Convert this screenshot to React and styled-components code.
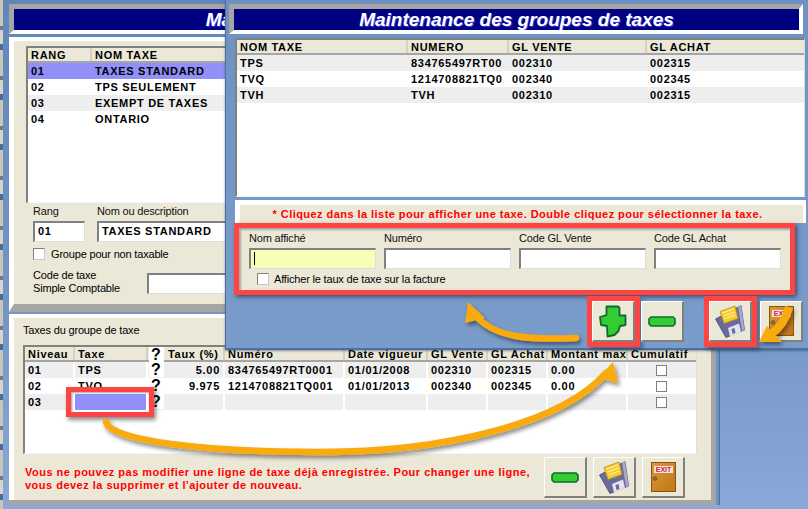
import styled, { createGlobalStyle } from "styled-components";

const beige = "#ebe8d8";
const rowGray = "#eeeeee";
const selected = "#9090f8";
const red = "#ff4444";
const orange = "#f9ab0b";

const GlobalStyle = createGlobalStyle`
  html, body {
    margin: 0;
    padding: 0;
    background: #6d92c2;
  }
  * {
    box-sizing: border-box;
  }
`;

const Desktop = styled.div`
  position: relative;
  width: 808px;
  height: 509px;
  overflow: hidden;
  font-family: "Liberation Sans", Arial, sans-serif;
  font-size: 11px;
  letter-spacing: -0.18px;
  color: #000;
  background: linear-gradient(180deg, #5f87b9 0%, #7396c6 60%, #8aa8d8 100%);
`;

const BackStrip = styled.div`
  position: absolute;
  left: 0;
  top: 0;
  width: 3px;
  height: 509px;
  background: repeating-linear-gradient(
    180deg,
    #c9c6b8 0,
    #c9c6b8 26px,
    #77778c 26px,
    #77778c 30px,
    #d8d5c8 30px,
    #d8d5c8 44px,
    #4c6d9c 44px,
    #4c6d9c 50px
  );
`;

const TopWindow = styled.section`
  position: absolute;
  left: 9px;
  top: 0;
  width: 707px;
  height: 312px;
  padding-top: 4px;
  display: flex;
  flex-direction: column;
`;

const LowerWindow = styled.section`
  position: absolute;
  left: 9px;
  top: 314px;
  width: 707px;
  height: 191px;
  display: flex;
  flex-direction: column;
  padding: 4px 0 0 5px;
  background: ${beige};
  border-right: 5px solid #a5a5a5;
  border-bottom: 5px solid #a5a5a5;
  box-shadow: inset 5px 4px 0 #fff, 3px 0 0 #6d92c2, 4px 0 0 #4d6f9e;
`;

const TaxWindow = styled.section`
  position: absolute;
  left: 225px;
  top: 0;
  width: 583px;
  height: 350px;
  padding: 4px 0 0 3px;
  display: flex;
  flex-direction: column;
  background: linear-gradient(180deg, #6d92c2 0%, #7a9ccb 100%);
  border-left: 1px solid #4d6f9e;
  border-bottom: 2px solid #4d6f9e;
  box-shadow: 0 1px 2px rgba(40, 60, 90, 0.5);
`;

const TitleFrame = styled.div`
  flex: none;
  height: 30px;
  margin-right: ${(p) => p.$right || 0}px;
  border-top: 5px solid #a5a5a5;
  border-left: 5px solid #a5a5a5;
  border-right: 4px solid #fff;
  border-bottom: 4px solid #fff;
`;

const TitleBar = styled.h1`
  margin: 0;
  height: 100%;
  display: flex;
  align-items: center;
  justify-content: center;
  background: #000080;
  color: #fff;
  font: italic bold 19px "Liberation Sans", Arial, sans-serif;
  letter-spacing: 0;
  white-space: nowrap;
  overflow: hidden;
  text-shadow: 1px 1px 0 #3a3ae0;
`;

const MainPanel = styled.div`
  flex: 1;
  margin-top: 3px;
  padding: 5px 12px 0;
  background: ${beige};
  border-top: 4px solid #fff;
  border-left: 5px solid #fff;
  border-bottom: 8px solid #a5a5a5;
`;

const ListBox = styled.div`
  flex: none;
  width: ${(p) => p.$width}px;
  height: ${(p) => p.$height}px;
  background: #fff;
  border-top: 2px solid #808080;
  border-left: 2px solid #808080;
  border-right: 1px solid #ddd;
  border-bottom: 1px solid #f4f4f4;
  overflow: hidden;
`;

const Row = styled.div`
  display: grid;
  grid-template-columns: ${(p) => p.$cols};
  height: 16px;
  font: bold 11px "Liberation Sans", Arial, sans-serif;
  letter-spacing: 0.7px;
  line-height: 16px;
  background: ${(p) => (p.$selected ? selected : p.$odd ? rowGray : "#fff")};
`;

const HeadRow = styled(Row)`
  background: ${beige};
  border-bottom: 2px solid #a5a5a5;
  height: 15px;
  line-height: 15px;
`;

const Cell = styled.div`
  padding: 0 3px;
  white-space: nowrap;
  overflow: hidden;
  height: 16px;
  text-align: ${(p) => p.$align || "left"};
  border-right: ${(p) => (p.$grid ? "2px solid #fff" : "none")};
`;

const HeadCell = styled(Cell)`
  height: 13px;
  border-right: 2px solid #d4d0c4;
  overflow: visible;
`;

const HeadLast = styled(Cell)`
  height: 13px;
  overflow: visible;
`;

const HelpCell = styled.div`
  display: flex;
  align-items: center;
  justify-content: center;
  height: 15px;
  margin: 0 1px;
  background: #fff;
  font: bold 16px/15px "Liberation Sans", Arial, sans-serif;
  letter-spacing: 0;
  border-right: 1px solid #fff;
`;

const BlueCell = styled.div`
  background: ${selected};
  border: 1px solid #fff;
  border-width: 0 2px 0 0;
`;

const CheckCell = styled.div`
  display: flex;
  align-items: center;
  justify-content: center;
`;

const CheckBox = styled.span`
  flex: none;
  display: block;
  width: 12px;
  height: 12px;
  background: #fff;
  border: 1px solid #808080;
  border-right-color: #c8c8c8;
  border-bottom-color: #c8c8c8;
`;

const GridCheck = styled(CheckBox)`
  width: 11px;
  height: 11px;
  border-color: #808080;
`;

const FormGrid = styled.div`
  display: grid;
  grid-template-columns: 52px 12px 400px;
  margin: 2px 0 0 7px;
  row-gap: 6px;
`;

const Field = styled.label`
  display: flex;
  flex-direction: column;
  grid-column: ${(p) => p.$col || "auto"};
  gap: 3px;
`;

const FieldLabel = styled.span`
  display: block;
  height: 13px;
  line-height: 13px;
  font-size: 11px;
  color: #111;
  white-space: nowrap;
`;

const Input = styled.div`
  height: 21px;
  padding: 0 3px;
  background: ${(p) => (p.$active ? "#f8fdb8" : "#fff")};
  border-top: 2px solid #808080;
  border-left: 2px solid #808080;
  border-right: 1px solid #ddd;
  border-bottom: 1px solid #ddd;
  font: bold 11px "Liberation Sans", Arial, sans-serif;
  letter-spacing: 0.7px;
  line-height: 17px;
  white-space: nowrap;
`;

const Caret = styled.span`
  display: block;
  width: 1px;
  height: 13px;
  margin-top: 2px;
  background: #000;
`;

const CheckRow = styled.div`
  display: flex;
  align-items: center;
  gap: 6px;
  grid-column: 1 / -1;
  font-size: 11px;
`;

const CodeRow = styled.div`
  display: flex;
  align-items: center;
  grid-column: 1 / -1;
  margin-top: 5px;
  gap: 15px;
`;

const CodeLabel = styled.div`
  width: 99px;
  margin-top: -2px;
  line-height: 13px;
  font-size: 11px;
`;

const CodeInput = styled(Input)`
  width: 300px;
`;

const GroupCaption = styled.div`
  margin: 6px 0 8px 9px;
  font-size: 11px;
  line-height: 13px;
`;

const GroupList = styled(ListBox)`
  margin-left: 9px;
`;

const LowerFoot = styled.div`
  display: flex;
  margin: 3px 0 0 11px;
  width: 660px;
  justify-content: space-between;
`;

const Warning = styled.p`
  margin: 9px 0 0;
  color: #ff0000;
  font: bold 11px "Liberation Sans", Arial, sans-serif;
  letter-spacing: 0.49px;
  line-height: 13px;
  white-space: nowrap;
`;

const ToolGroup = styled.div`
  display: flex;
  gap: ${(p) => p.$gap || 6}px;
`;

const ToolButton = styled.button`
  flex: none;
  width: 43px;
  height: 41px;
  padding: 0;
  display: flex;
  align-items: center;
  justify-content: center;
  background: ${beige};
  border: 1px solid #fff;
  border-right: 2px solid #808080;
  border-bottom: 2px solid #808080;
  ${(p) =>
    p.$marked &&
    `
    outline: 5px solid ${red};
    outline-offset: 0;
    box-shadow: 3px 3px 4px 5px rgba(30, 40, 60, 0.45);
  `}
`;

const TaxListBox = styled(ListBox)`
  margin: 4px 0 0 6px;
`;

const NoticeStrip = styled.div`
  flex: none;
  height: 23px;
  margin: 3px 2px 0 6px;
  padding: 3px 8px 0 0;
  background: ${beige};
  border-top: 5px solid #fff;
  border-left: 5px solid #fff;
  border-right: 3px solid #fff;
  color: #ff0000;
  text-align: center;
  font: bold 11px "Liberation Sans", Arial, sans-serif;
  letter-spacing: 0.45px;
  line-height: 12px;
  white-space: nowrap;
`;

const FieldsPanel = styled.div`
  flex: none;
  width: 561px;
  height: 72px;
  margin-left: 5px;
  padding: 4px 10px 0;
  background: ${beige};
  border: 5px solid ${red};
  box-shadow: 2px 2px 4px rgba(20, 30, 50, 0.6), inset 2px 2px 2px rgba(90, 90, 90, 0.45);
`;

const FieldRow = styled.div`
  display: grid;
  grid-template-columns: repeat(4, 127px);
  column-gap: 8px;
`;

const PanelCheck = styled.div`
  display: flex;
  align-items: center;
  gap: 5px;
  margin: 4px 0 0 8px;
  font-size: 11px;
`;

const WindowTools = styled.div`
  display: flex;
  justify-content: flex-end;
  margin: 6px 5px 0 0;
  gap: 25px;
`;

const Overlay = styled.svg`
  position: absolute;
  left: 0;
  top: 0;
  width: 808px;
  height: 509px;
  pointer-events: none;
`;

const CellMark = styled.div`
  position: absolute;
  left: 66px;
  top: 387px;
  width: 88px;
  height: 30px;
  border: 5px solid ${red};
  box-shadow: 2px 3px 4px rgba(30, 30, 30, 0.5), inset 1px 1px 2px rgba(80, 80, 80, 0.5);
`;

const PlusIcon = () => (
  <svg width="28" height="33" viewBox="0 0 28 33">
    <path
      d="M7.5 1.5 L19 1.5 L20.5 3 L20.5 10.5 L26.5 10.5 L26.5 20 L21 21 L19.5 26 L15.5 30 L8.5 31.5 L8 21 L2 20 L1 12 L7.5 10 Z"
      fill="#33cc33"
      stroke="#0b6b2e"
      strokeWidth="1.8"
      strokeLinejoin="round"
    />
  </svg>
);

const MinusIcon = () => (
  <svg width="28" height="11" viewBox="0 0 28 11">
    <path
      d="M3 1 H25 L27 3 V8 L25 10 H3 L1 8 V3 Z"
      fill="#33cc33"
      stroke="#0b6b2e"
      strokeWidth="1.6"
    />
  </svg>
);

const SaveIcon = () => (
  <svg width="30" height="33" viewBox="0 0 30 33">
    <path d="M0.5 14 L26 0.5 L29.5 25 L11 32.5 Z" fill="#6a6a9c" stroke="#45456e" strokeWidth="0.8" />
    <path d="M23 1.5 L26 0.5 L29.5 25 L27 26 Z" fill="#a8a8c8" />
    <path d="M5 6.5 L20 1 L23 13.5 L9 18.5 Z" fill="#f6cc30" stroke="#b98d18" strokeWidth="0.8" />
    <path d="M7.5 8 L19 4 M8.5 11 L20 7 M9.5 14 L20.5 10" stroke="#fff09a" strokeWidth="1.2" />
    <path d="M13 23 L24 18.5 L26 27 L15 31.5 Z" fill="#e4e4ee" />
    <path d="M16.5 24 L19.5 23 L20.5 28 L17.5 29 Z" fill="#6a6a9c" />
  </svg>
);

const ExitIcon = () => (
  <svg width="25" height="30" viewBox="0 0 25 30">
    <defs>
      <linearGradient id="doorWood" x1="0" x2="1" y1="0" y2="1">
        <stop offset="0" stopColor="#dd9a35" />
        <stop offset="1" stopColor="#bd7518" />
      </linearGradient>
    </defs>
    <rect x="0.5" y="0.5" width="24" height="29" fill="url(#doorWood)" stroke="#8a5410" />
    <rect x="3" y="4" width="19" height="7" fill="#f4e6e6" />
    <text
      x="12.5"
      y="10"
      textAnchor="middle"
      fontFamily="Liberation Sans, Arial, sans-serif"
      fontSize="7"
      fontWeight="bold"
      fill="#dd1133"
    >
      EXIT
    </text>
    <circle cx="4" cy="16.5" r="2" fill="#8a6a3a" stroke="#6a4a20" strokeWidth="0.5" />
  </svg>
);

const leftCols = "64px 640px";
const taxCols = "171px 101px 138px 140px";
const groupCols = "50px 73px 17px 60px 120px 83px 60px 60px 80px 67px";

const lowerRows = [
  { level: "01", tax: "TPS", rate: "5.00", num: "834765497RT0001", date: "01/01/2008", sale: "002310", buy: "002315", max: "0.00" },
  { level: "02", tax: "TVQ", rate: "9.975", num: "1214708821TQ001", date: "01/01/2013", sale: "002340", buy: "002345", max: "0.00" },
  { level: "03", blank: true },
];

const rankRows = [
  ["01", "TAXES STANDARD"],
  ["02", "TPS SEULEMENT"],
  ["03", "EXEMPT DE TAXES"],
  ["04", "ONTARIO"],
];

const taxRows = [
  ["TPS", "834765497RT00", "002310", "002315"],
  ["TVQ", "1214708821TQ0", "002340", "002345"],
  ["TVH", "TVH", "002310", "002315"],
];

const App = () => {
  return (
    <Desktop>
      <GlobalStyle />
      <BackStrip />

      <TopWindow>
        <TitleFrame>
          <TitleBar as="div">Maintenance des groupes de taxes</TitleBar>
        </TitleFrame>
        <MainPanel>
          <ListBox $width={660} $height={157}>
            <HeadRow $cols={leftCols}>
              <HeadCell>RANG</HeadCell>
              <HeadLast>NOM TAXE</HeadLast>
            </HeadRow>
            {rankRows.map((row, i) => (
              <Row key={row[0]} $cols={leftCols} $selected={i === 0} $odd={i === 2}>
                <Cell>{row[0]}</Cell>
                <Cell>{row[1]}</Cell>
              </Row>
            ))}
          </ListBox>
          <FormGrid>
            <Field>
              <FieldLabel>Rang</FieldLabel>
              <Input>01</Input>
            </Field>
            <Field $col="3">
              <FieldLabel>Nom ou description</FieldLabel>
              <Input>TAXES STANDARD</Input>
            </Field>
            <CheckRow>
              <CheckBox />
              Groupe pour non taxable
            </CheckRow>
            <CodeRow>
              <CodeLabel>
                Code de taxe
                <br />
                Simple Comptable
              </CodeLabel>
              <CodeInput />
            </CodeRow>
          </FormGrid>
        </MainPanel>
      </TopWindow>

      <LowerWindow>
        <GroupCaption>Taxes du groupe de taxe</GroupCaption>
        <GroupList $width={674} $height={109}>
          <HeadRow $cols={groupCols}>
            <HeadCell>Niveau</HeadCell>
            <HeadCell>Taxe</HeadCell>
            <HelpCell>?</HelpCell>
            <HeadCell>Taux (%)</HeadCell>
            <HeadCell>Numéro</HeadCell>
            <HeadCell>Date vigueur</HeadCell>
            <HeadCell>GL Vente</HeadCell>
            <HeadCell>GL Achat</HeadCell>
            <HeadCell>Montant max</HeadCell>
            <HeadLast>Cumulatif</HeadLast>
          </HeadRow>
          {lowerRows.map((row, i) => (
            <Row key={row.level} $cols={groupCols} $odd={i % 2 === 0}>
              <Cell $grid>{row.level}</Cell>
              {row.blank ? <BlueCell /> : <Cell $grid>{row.tax}</Cell>}
              <HelpCell>?</HelpCell>
              <Cell $grid $align="right">{row.rate}</Cell>
              <Cell $grid>{row.num}</Cell>
              <Cell $grid>{row.date}</Cell>
              <Cell $grid>{row.sale}</Cell>
              <Cell $grid>{row.buy}</Cell>
              <Cell $grid>{row.max}</Cell>
              <CheckCell>
                <GridCheck />
              </CheckCell>
            </Row>
          ))}
        </GroupList>
        <LowerFoot>
          <Warning>
            Vous ne pouvez pas modifier une ligne de taxe déjà enregistrée. Pour changer une ligne,
            <br />
            vous devez la supprimer et l'ajouter de nouveau.
          </Warning>
          <ToolGroup>
            <ToolButton><MinusIcon /></ToolButton>
            <ToolButton><SaveIcon /></ToolButton>
            <ToolButton><ExitIcon /></ToolButton>
          </ToolGroup>
        </LowerFoot>
      </LowerWindow>

      <CellMark />

      <TaxWindow>
        <TitleFrame $right={5}>
          <TitleBar>Maintenance des groupes de taxes</TitleBar>
        </TitleFrame>
        <TaxListBox $width={570} $height={159}>
          <HeadRow $cols={taxCols}>
            <HeadCell>NOM TAXE</HeadCell>
            <HeadCell>NUMERO</HeadCell>
            <HeadCell>GL VENTE</HeadCell>
            <HeadLast>GL ACHAT</HeadLast>
          </HeadRow>
          {taxRows.map((row, i) => (
            <Row key={row[0]} $cols={taxCols} $odd={i % 2 === 0}>
              {row.map((value, j) => (
                <Cell key={j}>{value}</Cell>
              ))}
            </Row>
          ))}
        </TaxListBox>
        <NoticeStrip>
          * Cliquez dans la liste pour afficher une taxe. Double cliquez pour sélectionner la taxe.
        </NoticeStrip>
        <FieldsPanel>
          <FieldRow>
            <Field>
              <FieldLabel>Nom affiché</FieldLabel>
              <Input $active><Caret /></Input>
            </Field>
            <Field>
              <FieldLabel>Numéro</FieldLabel>
              <Input />
            </Field>
            <Field>
              <FieldLabel>Code GL Vente</FieldLabel>
              <Input />
            </Field>
            <Field>
              <FieldLabel>Code GL Achat</FieldLabel>
              <Input />
            </Field>
          </FieldRow>
          <PanelCheck>
            <CheckBox />
            Afficher le taux de taxe sur la facture
          </PanelCheck>
        </FieldsPanel>
        <WindowTools>
          <ToolGroup $gap={6}>
            <ToolButton $marked><PlusIcon /></ToolButton>
            <ToolButton><MinusIcon /></ToolButton>
          </ToolGroup>
          <ToolGroup $gap={8}>
            <ToolButton $marked><SaveIcon /></ToolButton>
            <ToolButton><ExitIcon /></ToolButton>
          </ToolGroup>
        </WindowTools>
      </TaxWindow>

      <Overlay viewBox="0 0 808 509">
        <defs>
          <filter id="arrowShadow" x="-10%" y="-10%" width="120%" height="130%">
            <feDropShadow dx="2" dy="3" stdDeviation="2" floodColor="#000" floodOpacity="0.45" />
          </filter>
        </defs>
        <g filter="url(#arrowShadow)" fill="none" stroke={orange} strokeLinecap="round">
          <path d="M106 422 C110 440 200 452 320 452 C440 452 560 425 606 373" strokeWidth="6.5" />
          <path d="M576 338 C530 340 495 338 476 316" strokeWidth="6.5" />
          <path d="M789 307 C786 320 780 328 770 335" strokeWidth="8" strokeLinecap="butt" />
          <path d="M613 362 L598 378 L618 383 Z" fill={orange} stroke="none" />
          <path d="M468 302 L485 318 L465 323 Z" fill={orange} stroke="none" />
          <path d="M759 342 L782 342 L767 326 Z" fill={orange} stroke="none" />
        </g>
      </Overlay>
    </Desktop>
  );
};

export default App;
